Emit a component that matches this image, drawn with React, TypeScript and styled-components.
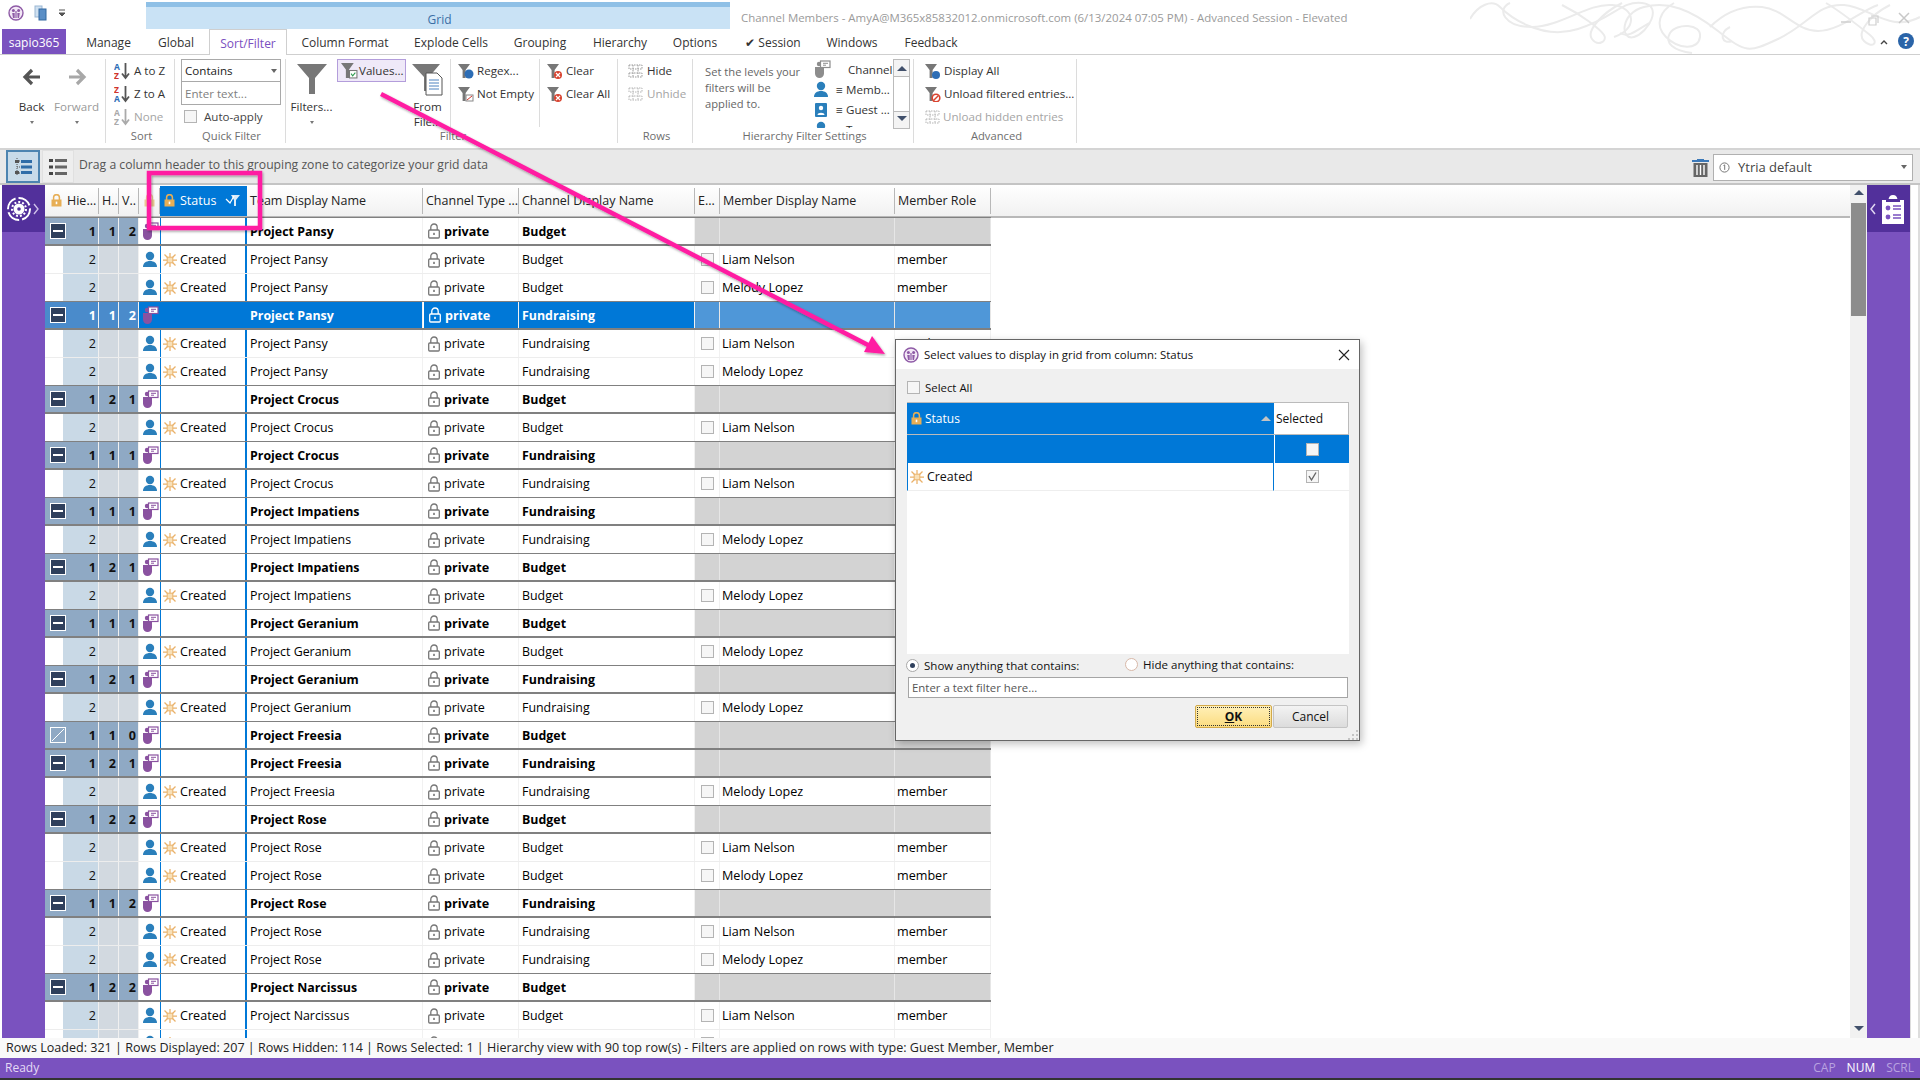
import React from "react";
import styled, { createGlobalStyle } from "styled-components";

const Global = createGlobalStyle`
  html, body { margin: 0; padding: 0; background: #fff; }
  body { width: 1920px; height: 1080px; overflow: hidden; font-family: "Open Sans", "Liberation Sans", sans-serif; font-size: 12px; color: #222; }
  * { box-sizing: border-box; }
`;

const Page = styled.div`
  position: relative; width: 1920px; height: 1080px; display: flex; flex-direction: column; background: #fff; overflow: hidden;
`;

/* ---------- title ---------- */
const TitleBar = styled.div`
  height: 29px; display: flex; align-items: stretch; flex: none;
`;
const Qat = styled.div`
  width: 146px; display: flex; align-items: center; gap: 10px; padding: 0 0 4px 8px;
`;
const ContextTab = styled.div`
  width: 584px; background: #c9e2f5; border-top: 5px solid #8fc0e6; margin-top: 2px; color: #3a6ea5;
  display: flex; align-items: center; justify-content: center; padding-top: 2px; padding-left: 3px; font-size: 12px;
`;
const WindowTitle = styled.div`
  padding: 5px 0 0 11px; color: #9a9a9a; display: flex; align-items: center; font-size: 11.45px; white-space: nowrap;
`;
const Ornament = styled.svg`
  position: absolute; left: 1470px; top: 1px; width: 450px; height: 54px; pointer-events: none;
`;
const WinControls = styled.svg`
  position: absolute; left: 1835px; top: 8px; width: 80px; height: 50px;
`;

const Tabs = styled.div`
  height: 26px; display: flex; padding-left: 2px; border-bottom: 1px solid #cfcfcf; flex: none; position: relative;
`;
const AppTab = styled.div`
  width: 64px; height: 25px; background: #7a52bf; color: #fff; display: flex; align-items: center; justify-content: center; padding-top: 1px;
`;
const Tab = styled.div<{ $w: number; $pl?: number; $active?: boolean }>`
  width: ${p => p.$w}px; height: ${p => (p.$active ? 26 : 25)}px; padding: 1px 0 0 ${p => p.$pl || 0}px; display: flex; align-items: center; justify-content: center; color: ${p => (p.$active ? "#7a4fc0" : "#333")};
  background: #fff; white-space: nowrap; position: relative;
  ${p => p.$active && "border: 1px solid #cfcfcf; border-bottom: none;"}
`;

/* ---------- ribbon ---------- */
const Ribbon = styled.div`
  height: 95px; display: flex; flex: none; border-bottom: 2px solid #d4d4d4; padding-top: 4px; background: #fff;
`;
const Group = styled.div<{ $w: number }>`
  width: ${p => p.$w}px; height: 84px; border-right: 1px solid #dcdcdc; display: flex; flex-direction: column; flex: none;
`;
const GroupBody = styled.div<{ $pl?: number }>`
  height: 70px; display: flex; flex: none; padding-left: ${p => p.$pl ?? 0}px;
`;
const GroupLabel = styled.div`
  height: 14px; line-height: 14px; text-align: center; color: #6e6e6e; font-size: 11.2px; white-space: nowrap; padding-left: 3px;
`;
const NavButton = styled.div<{ $off?: boolean }>`
  width: 45px; display: flex; flex-direction: column; align-items: center; color: ${p => (p.$off ? "#9a9a9a" : "#333")}; font-size: 11.6px; padding-top: 8px;
`;
const NavIconBox = styled.div`
  height: 32px;
`;
const Caret = styled.div`
  width: 0; height: 0; border-left: 2.5px solid transparent; border-right: 2.5px solid transparent; border-top: 3px solid #777; margin-top: 7px;
`;
const SmallCol = styled.div<{ $w: number; $pl: number; $rule?: boolean }>`
  width: ${p => p.$w}px; padding-left: ${p => p.$pl}px; display: flex; flex-direction: column; flex: none;
  ${p => p.$rule && "border-right: 1px solid #dcdcdc; height: 68px;"}
`;
const SmallItem = styled.div<{ $off?: boolean; $gap?: number; $active?: boolean }>`
  height: 23px; display: flex; align-items: center; gap: ${p => p.$gap ?? 2}px; white-space: nowrap; font-size: 11.6px; color: ${p => (p.$off ? "#a5a5a5" : "#333")};
  ${p => p.$active && "background: #efe9f8; border: 1px solid #b39ddb; width: 69px; margin-left: 0; padding-left: 3px;"}
`;
const BigButton = styled.div<{ $w: number; $rule?: boolean; $pl?: number }>`
  width: ${p => p.$w}px; display: flex; flex-direction: column; align-items: center; font-size: 11.6px; flex: none; color: #333; padding-top: 4px; line-height: 15px; text-align: center;
  ${p => p.$rule && "border-right: 1px solid #dcdcdc; height: 68px; padding-right: 2px;"}
`;
const BigIconBox = styled.div`
  height: 36px;
`;
const QuickCol = styled.div`
  padding: 0 0 0 6px; display: flex; flex-direction: column;
`;
const SelectBox = styled.div`
  width: 100px; height: 23px; border: 1px solid #a9a9a9; display: flex; align-items: center; justify-content: space-between; padding: 0 3px; color: #222; font-size: 11.6px;
`;
const TextBox = styled.div`
  width: 100px; height: 23px; border: 1px solid #a9a9a9; border-top: none; display: flex; align-items: center; padding: 0 3px; color: #808080; font-size: 11.6px;
`;
const DownTri = styled.div`
  width: 0; height: 0; border-left: 3.5px solid transparent; border-right: 3.5px solid transparent; border-top: 4px solid #666;
`;
const AutoRow = styled.div`
  height: 22px; display: flex; align-items: center; gap: 7px; padding-left: 3px; font-size: 11.6px; color: #444;
`;
const Check = styled.div`
  width: 13px; height: 13px; border: 1px solid #b4b4b4; background: #f6f6f6; display: flex; align-items: center; justify-content: center; flex: none;
`;
const LevelsText = styled.div`
  width: 117px; padding: 5px 0 0 12px; line-height: 16px; color: #666; font-size: 11.2px; flex: none;
`;
const LevelList = styled.div`
  width: 83px; height: 69px; overflow: hidden; flex: none;
`;
const LevelItem = styled.div`
  height: 20px; display: flex; align-items: center; padding-left: 3px; font-size: 11.6px; color: #333; white-space: nowrap;
`;
const LevelEq = styled.span`
  width: 17px; text-align: center; flex: none; padding-left: 4px;
`;
const LevelScroll = styled.div`
  width: 17px; height: 70px; border: 1px solid #bbb; display: flex; flex-direction: column; justify-content: space-between; flex: none;
`;
const LevelArrow = styled.div`
  height: 17px; border-bottom: 1px solid #bbb; background: #f4f4f4; display: flex; align-items: center; justify-content: center;
  &:last-child { border-bottom: none; border-top: 1px solid #bbb; }
`;

/* ---------- group bar ---------- */
const GroupBar = styled.div`
  height: 35px; background: #e9e9e9; display: flex; align-items: center; padding-left: 6px; border-bottom: 2px solid #c4c4c4; flex: none;
`;
const ViewBtn = styled.div<{ $on?: boolean }>`
  width: ${p => (p.$on ? 34 : 32)}px; height: 33px; margin-right: 2px; display: flex; align-items: center; justify-content: center;
  background: ${p => (p.$on ? "#c8dbe9" : "#eee")}; border: ${p => (p.$on ? "2px solid #4d84b0" : "1px solid #e0e0e0")};
`;
const DragHint = styled.div`
  color: #555; font-size: 12.2px; padding: 0 0 4px 3px; flex: 1; white-space: nowrap;
`;
const Trash = styled.div`
  margin-right: 4px; display: flex;
`;
const ViewCombo = styled.div`
  width: 200px; height: 27px; background: #fff; border: 1px solid #b0b0b0; display: flex; align-items: center; padding: 0 5px; gap: 8px; margin: 1px 7px 0 0; font-size: 13px; color: #444;
`;
const ComboText = styled.span`
  flex: 1;
`;

/* ---------- grid ---------- */
const Main = styled.div`
  height: 853px; display: flex; flex: none; overflow: hidden;
`;
const LeftRail = styled.div`
  width: 43px; margin-left: 2px; background: #7a52bf; flex: none;
`;
const RailHead = styled.div`
  height: 47px; background: #52309b; display: flex; align-items: center; padding-left: 3px;
`;
const Grid = styled.div`
  flex: 1; min-width: 0; overflow: hidden;
`;
const COLS = "54px 20px 20px 21px 87px 176px 96px 176px 25px 175px 96px";
const HeaderRow = styled.div`
  height: 33px; display: flex; background: linear-gradient(#fff, #f1f1f1); border-bottom: 2px solid #b8b8b8;
`;
const HeaderCols = styled.div`
  display: grid; grid-template-columns: ${COLS}; width: 946px;
`;
const HeadCell = styled.div<{ $active?: boolean; $pl?: number }>`
  display: flex; align-items: center; gap: 5px; padding: 0 0 2px ${p => p.$pl ?? 3}px; white-space: nowrap; overflow: hidden;
  border-right: 1px solid ${p => (p.$active ? "#0078d7" : "#b8b8b8")}; margin: ${p => (p.$active ? "1px 0 0 0" : "3px 0 2px 0")};
  background: ${p => (p.$active ? "#0078d7" : "transparent")}; color: ${p => (p.$active ? "#fff" : "#222")};
  font-size: 12.5px;
`;
const HeadFilter = styled.span`
  margin-left: auto; margin-right: 6px; display: flex;
`;
const Row = styled.div<{ $kind: "parent" | "child" | "selected" }>`
  height: 28px; width: 946px; display: grid; grid-template-columns: ${COLS}; position: relative;
  background: ${p => (p.$kind === "selected" ? "#0078d7" : "#fff")};
  color: ${p => (p.$kind === "selected" ? "#fff" : "#000")};
  font-weight: ${p => (p.$kind === "child" ? 400 : 700)};
  border-bottom: ${p => (p.$kind === "child" ? "1px solid #ededed" : "2px solid #808080")};
  ${p => p.$kind !== "child" && "box-shadow: 0 -1px 0 #808080; z-index: 1;"}
`;
const Cell = styled.div`
  display: flex; align-items: center; padding-left: 3px; white-space: nowrap; overflow: hidden; font-size: 12.4px; border-right: 1px solid #f1f1f1;
`;
const HieCell = styled.div<{ $kind: string }>`
  display: flex; align-items: center; justify-content: flex-end; padding-right: 2px; font-size: 12.6px; position: relative;
  background: ${p => (p.$kind === "child" ? "linear-gradient(90deg,#fff 18px,#c9d9e6 18px)" : p.$kind === "selected" ? "#4a8bcb" : "#8fa9c4")};
  border-right: 1px solid #f0f0f0; color: ${p => (p.$kind === "selected" ? "#fff" : "#111")};
`;
const LevelCell = styled.div<{ $kind: string }>`
  display: flex; align-items: center; justify-content: flex-end; padding-right: 2px; font-size: 12.6px;
  background: ${p => (p.$kind === "child" ? "#d2d9e0" : p.$kind === "selected" ? "#4a8bcb" : "#8fa9c4")};
  border-right: 1px solid #f0f0f0; color: ${p => (p.$kind === "selected" ? "#fff" : "#111")};
`;
const ExpandBox = styled.div<{ $flat?: boolean }>`
  position: absolute; left: 5px; top: 5px; width: 16px; height: 16px; border: 1px solid #fff;
  background: ${p => (p.$flat ? "transparent" : "#2e3f5c")}; display: flex; align-items: center; justify-content: center;
`;
const Minus = styled.div`
  width: 10px; height: 2px; background: #fff;
`;
const IconCell = styled.div`
  display: flex; align-items: center; justify-content: center;
`;
const StatusCell = styled.div`
  display: flex; align-items: center; gap: 3px; padding-left: 2px; font-size: 12.6px; border-left: 1px solid #0078d7; border-right: 2px solid #0078d7;
`;
const TypeCell = styled.div<{ $sel?: boolean }>`
  display: flex; align-items: center; gap: 3px; padding-left: 4px; font-size: 12.6px; border-right: 1px solid #f1f1f1;
  ${p => p.$sel && "border-left: 1px solid #fff;"}
`;
const GrayCell = styled.div<{ $kind: string }>`
  display: flex; align-items: center; padding-left: 2px; font-size: 12.6px; white-space: nowrap;
  background: ${p => (p.$kind === "parent" ? "#d3d3d3" : p.$kind === "selected" ? "#4f97d8" : "transparent")};
  border-right: 1px solid ${p => (p.$kind === "child" ? "#f1f1f1" : "#e6e6e6")};
`;
const ECell = styled(GrayCell)`
  justify-content: center; padding-left: 1px;
`;

const VScroll = styled.div`
  width: 17px; flex: none; background: #f1f1f1; display: flex; flex-direction: column; align-items: center; padding-top: 5px;
`;
const ScrollUp = styled.div`
  width: 0; height: 0; border-left: 5px solid transparent; border-right: 5px solid transparent; border-bottom: 5px solid #41506b;
`;
const Thumb = styled.div`
  width: 15px; height: 113px; background: #8c8c8c; margin-top: 8px;
`;
const ScrollDown = styled.div`
  width: 0; height: 0; border-left: 5px solid transparent; border-right: 5px solid transparent; border-top: 5px solid #41506b; margin-top: auto; margin-bottom: 7px;
`;
const RightRail = styled.div`
  width: 43px; background: #7a52bf; flex: none;
`;
const RightHead = styled.div`
  height: 47px; background: #52309b; display: flex; align-items: center; padding-left: 2px;
`;
const RightEdge = styled.div`
  width: 10px; flex: none; border-left: 1px solid #ddd; border-right: 2px solid #ddd;
`;

/* ---------- status ---------- */
const InfoLine = styled.div`
  height: 20px; background: #f9f9f9; padding: 0 0 1px 6px; display: flex; align-items: center; color: #222; font-size: 12.55px; white-space: nowrap; flex: none;
`;
const ReadyBar = styled.div`
  height: 20px; background: #7a52bf; color: #e4daf5; display: flex; align-items: center; padding: 0 6px 1px 5px; font-size: 12px; flex: none;
`;
const ReadyText = styled.span`
  flex: 1;
`;
const Indicator = styled.span<{ $on?: boolean }>`
  margin-left: 11px; color: ${p => (p.$on ? "#fff" : "#b9a3e0")};
`;
const Taskbar = styled.div`
  height: 3px; background: #333; flex: none;
`;

/* ---------- annotation ---------- */
const Annotation = styled.svg`
  position: absolute; left: 0; top: 0; width: 1920px; height: 1080px; pointer-events: none; z-index: 5;
`;

/* ---------- dialog ---------- */
const Dialog = styled.div`
  position: absolute; left: 895px; top: 339px; width: 465px; height: 402px; background: #f0f0f0; border: 1px solid #666; box-shadow: 2px 3px 8px rgba(0,0,0,.25); z-index: 6; display: flex; flex-direction: column;
`;
const DialogTitle = styled.div`
  height: 29px; background: #fff; display: flex; align-items: center; padding: 0 9px 0 7px; gap: 5px; color: #111; font-size: 11.4px; flex: none;
`;
const DialogTitleText = styled.span`
  flex: 1;
`;
const SelectAll = styled.div`
  height: 33px; display: flex; align-items: center; gap: 5px; padding: 4px 0 0 11px; font-size: 11.4px; flex: none; color: #111;
`;
const DGrid = styled.div`
  margin: 0 10px 0 11px; height: 252px; background: #fff; border-top: 1px solid #bbb; flex: none;
`;
const DRow = styled.div<{ $h: number; $blue?: boolean }>`
  height: ${p => p.$h}px; display: grid; grid-template-columns: 367px 1fr;
  ${p => p.$blue && "background: #0078d7;"}
`;
const DHeadStatus = styled.div`
  background: #0078d7; color: #fff; display: flex; align-items: center; gap: 3px; padding-left: 4px; font-size: 12px; border-bottom: 1px solid #bbb;
`;
const SortUp = styled.div`
  margin-left: auto; margin-right: 3px; width: 0; height: 0; border-left: 5px solid transparent; border-right: 5px solid transparent; border-bottom: 5px solid #c4c4c4;
`;
const DHeadSelected = styled.div`
  background: #fff; display: flex; align-items: center; padding-left: 2px; font-size: 12px; border-right: 1px solid #bbb; border-bottom: 1px solid #bbb; color: #111;
`;
const DCell = styled.div<{ $edge?: boolean }>`
  display: flex; align-items: center; gap: 3px; padding-left: 2px; font-size: 12.4px; color: #111;
  ${p => p.$edge && "border-left: 1px solid #0078d7; border-right: 1px solid #0078d7; border-bottom: 1px solid #eee;"}
`;
const DCheckCell = styled.div<{ $blue?: boolean }>`
  display: flex; align-items: center; justify-content: center; border-left: 1px solid ${p => (p.$blue ? "#fff" : "transparent")}; ${p => !p.$blue && "border-bottom: 1px solid #eee;"}
`;
const RadioRow = styled.div`
  height: 23px; display: flex; padding: 0 0 0 10px; flex: none; font-size: 11.55px; color: #111;
`;
const RadioOpt = styled.div<{ $w?: number; $up?: number }>`
  display: flex; align-items: center; gap: 5px; width: ${p => p.$w ?? 219}px; margin-top: ${p => -(p.$up ?? 0)}px;
`;
const Radio = styled.div<{ $on?: boolean }>`
  width: 13px; height: 13px; border-radius: 50%; border: 1px solid ${p => (p.$on ? "#a8a8a8" : "#d8b8a8")}; background: #fff; display: flex; align-items: center; justify-content: center; flex: none;
  &::after { content: ""; width: 5px; height: 5px; border-radius: 50%; background: ${p => (p.$on ? "#2e3f5c" : "transparent")}; }
`;
const FilterInput = styled.div`
  margin: 0 11px 0 12px; height: 21px; background: #fff; border: 1px solid #a5a5a5; display: flex; align-items: center; padding-left: 3px; color: #555; font-size: 11.4px; flex: none;
`;
const DButtons = styled.div`
  display: flex; justify-content: flex-end; margin: 7px 11px 0 0; gap: 1px; flex: none;
`;
const OkBtn = styled.div`
  width: 77px; height: 23px; border: 1px solid #d2a94a; background: linear-gradient(#fff0b8, #fbdc80); border-radius: 2px; display: flex; align-items: center; justify-content: center; font-weight: 700; color: #111; font-size: 12px; outline: 1px dotted #333; outline-offset: -3px;
`;
const OkKey = styled.span`
  text-decoration: underline;
`;
const CancelBtn = styled.div`
  width: 75px; height: 23px; border: 1px solid #c4c4c4; background: linear-gradient(#f3f3f3, #dcdcdc); border-radius: 2px; display: flex; align-items: center; justify-content: center; font-size: 12px; color: #111;
`;
const Grip = styled.svg`
  position: absolute; right: 0; bottom: 0; width: 12px; height: 12px;
`;

/* ---------- icons ---------- */
const Funnel = ({ s = 16, c = "#777", badge }: { s?: number; c?: string; badge?: React.ReactNode }) => (
  <svg width={s} height={s} viewBox="0 0 16 16">
    <path d="M0 1h12L7.6 7v8H4.6V7z" fill={c} />
    {badge}
  </svg>
);
const X = ({ x = 11, y = 12, r = 4 }) => (
  <g>
    <circle cx={x} cy={y} r={r} fill="#d9432f" />
    <path d={`M${x - 2} ${y - 2}l4 4m0-4l-4 4`} stroke="#fff" strokeWidth="1.2" />
  </g>
);
const Team = ({ c = "#8a52a0" }: { c?: string }) => (
  <svg width="18" height="18" viewBox="0 0 18 18">
    <path d="M2 7h9v6.5a4.5 4.5 0 0 1-9 0z" fill={c} />
    <circle cx="6" cy="4" r="2.2" fill={c} />
    <rect x="7.5" y="1" width="9.5" height="6.5" fill="#fff" stroke={c} strokeWidth="1.2" />
    <path d="M10 3.3h5M10 5.2h3" stroke={c} strokeWidth="1" />
  </svg>
);
const Person = () => (
  <svg width="16" height="17" viewBox="0 0 16 17">
    <circle cx="8" cy="5" r="4.2" fill="#2a7fbb" />
    <path d="M1 16c0-4 3-6 7-6s7 2 7 6z" fill="#2a7fbb" />
  </svg>
);
const Sun = () => (
  <svg width="14" height="14" viewBox="0 0 14 14" stroke="#eab26a" strokeWidth="1.25" fill="none">
    <path d="M7 0v4M7 10v4M0 7h4M10 7h4M1.5 1.5l3 3M9.5 9.5l3 3M12.5 1.5l-3 3M4.5 9.5l-3 3" />
    <rect x="4.2" y="4.2" width="5.6" height="5.6" fill="#f8e0b8" strokeWidth="1" />
  </svg>
);
const Lock = ({ c = "#777" }: { c?: string }) => (
  <svg width="14" height="16" viewBox="0 0 14 16" fill="none" stroke={c} strokeWidth="1.3">
    <path d="M3.8 7V4.2a3.2 3.2 0 0 1 6.4 0V7" />
    <rect x="1.7" y="7" width="10.6" height="8" rx="1" />
    <rect x="6.2" y="9.8" width="1.6" height="2.2" fill={c} stroke="none" />
  </svg>
);
const GoldLock = ({ op = 1 }: { op?: number }) => (
  <svg width="11" height="13" viewBox="0 0 11 13" opacity={op}>
    <path d="M2.6 6V3.6a2.9 2.9 0 0 1 5.8 0V6" fill="none" stroke="#e7ae55" strokeWidth="1.5" />
    <rect x="0.5" y="5.5" width="10" height="7" fill="#e7ae55" />
    <rect x="4.7" y="7.6" width="1.6" height="2.6" fill="#fff" />
  </svg>
);
const AppLogo = ({ s = 16 }: { s?: number }) => (
  <svg width={s} height={s} viewBox="0 0 16 16">
    <circle cx="8" cy="8" r="7" fill="#f3e8f6" stroke="#8e5aa6" strokeWidth="1.4" />
    <circle cx="5.4" cy="5.6" r="1.5" fill="#8e5aa6" />
    <circle cx="10.6" cy="5.6" r="1.5" fill="#8e5aa6" />
    <path d="M4.2 8h2.5v5H5zM9.3 8h2.5L11 13H9.6zM7.4 6h1.2v7H7.4z" fill="#8e5aa6" />
  </svg>
);
const SortIcon = ({ top, bottom, off }: { top: string; bottom: string; off?: boolean }) => (
  <svg width="18" height="18" viewBox="0 0 18 18" fontFamily="Open Sans" fontSize="8.5" fontWeight="700">
    <text x="0" y="8" fill={off ? "#aaa" : top === "A" ? "#2d6db5" : "#d0342c"}>{top}</text>
    <text x="0" y="17" fill={off ? "#aaa" : bottom === "A" ? "#2d6db5" : "#d0342c"}>{bottom}</text>
    <path d="M11.5 1v14M8 11.5l3.5 4.5 3.5-4.5" fill="none" stroke={off ? "#aaa" : "#555"} strokeWidth="1.8" />
  </svg>
);
const GridIcon = ({ off = false }: { off?: boolean }) => (
  <svg width="15" height="16" viewBox="0 0 15 16" fill="none" stroke={off ? "#b4b4b4" : "#999"} strokeDasharray="1.5 1">
    <path d="M1 2h13v4H1zM1 10h13v4H1z" />
    <path d="M5 2v12M10 2v12" />
  </svg>
);

const rows: { k: "parent" | "child" | "selected"; nums?: string; team: string; ch: string; m?: string; flat?: boolean; clipped?: boolean }[] = [
  { k: "parent", nums: "112", team: "Pansy", ch: "Budget" },
  { k: "child", team: "Pansy", ch: "Budget", m: "Liam Nelson" },
  { k: "child", team: "Pansy", ch: "Budget", m: "Melody Lopez" },
  { k: "selected", nums: "112", team: "Pansy", ch: "Fundraising" },
  { k: "child", team: "Pansy", ch: "Fundraising", m: "Liam Nelson" },
  { k: "child", team: "Pansy", ch: "Fundraising", m: "Melody Lopez" },
  { k: "parent", nums: "121", team: "Crocus", ch: "Budget" },
  { k: "child", team: "Crocus", ch: "Budget", m: "Liam Nelson" },
  { k: "parent", nums: "111", team: "Crocus", ch: "Fundraising" },
  { k: "child", team: "Crocus", ch: "Fundraising", m: "Liam Nelson" },
  { k: "parent", nums: "111", team: "Impatiens", ch: "Fundraising" },
  { k: "child", team: "Impatiens", ch: "Fundraising", m: "Melody Lopez" },
  { k: "parent", nums: "121", team: "Impatiens", ch: "Budget" },
  { k: "child", team: "Impatiens", ch: "Budget", m: "Melody Lopez" },
  { k: "parent", nums: "111", team: "Geranium", ch: "Budget" },
  { k: "child", team: "Geranium", ch: "Budget", m: "Melody Lopez" },
  { k: "parent", nums: "121", team: "Geranium", ch: "Fundraising" },
  { k: "child", team: "Geranium", ch: "Fundraising", m: "Melody Lopez" },
  { k: "parent", nums: "110", team: "Freesia", ch: "Budget", flat: true },
  { k: "parent", nums: "121", team: "Freesia", ch: "Fundraising" },
  { k: "child", team: "Freesia", ch: "Fundraising", m: "Melody Lopez" },
  { k: "parent", nums: "122", team: "Rose", ch: "Budget" },
  { k: "child", team: "Rose", ch: "Budget", m: "Liam Nelson" },
  { k: "child", team: "Rose", ch: "Budget", m: "Melody Lopez" },
  { k: "parent", nums: "112", team: "Rose", ch: "Fundraising" },
  { k: "child", team: "Rose", ch: "Fundraising", m: "Liam Nelson" },
  { k: "child", team: "Rose", ch: "Fundraising", m: "Melody Lopez" },
  { k: "parent", nums: "122", team: "Narcissus", ch: "Budget" },
  { k: "child", team: "Narcissus", ch: "Budget", m: "Liam Nelson" },
  { k: "child", team: "Narcissus", ch: "Budget", clipped: true },
];

const tabs: [string, number, number?, boolean?][] = [
  ["Manage", 77, 8], ["Global", 66], ["Sort/Filter", 78, 0, true], ["Column Format", 116], ["Explode Cells", 96], ["Grouping", 82],
  ["Hierarchy", 78], ["Options", 72], ["✔ Session", 84], ["Windows", 74], ["Feedback", 84],
];

export default function App() {
  return (
    <Page>
      <Global />
      <TitleBar>
        <Qat>
          <AppLogo />
          <svg width="14" height="16" viewBox="0 0 14 16"><rect x="1" y="1" width="7" height="11" fill="#cfe0f0" stroke="#9bb7d4" /><rect x="5" y="4" width="7" height="11" fill="#5b8fc6" stroke="#33689f" /></svg>
          <svg width="8" height="8" viewBox="0 0 8 8"><path d="M1 1h6M1 4h6L4 7z" stroke="#555" fill="#555" /></svg>
        </Qat>
        <ContextTab>Grid</ContextTab>
        <WindowTitle>Channel Members - AmyA@M365x85832012.onmicrosoft.com (6/13/2024 07:05 PM) - Advanced Session - Elevated</WindowTitle>
      </TitleBar>
      <Ornament viewBox="0 0 450 54" fill="none" stroke="#ebebeb" strokeWidth="2">
        <path d="M0 18C8 4 22-2 30 6s40 34 78 22S150 0 172 2s6 30-8 34-14-24 10-30 46 2 74 24 30 22 60 8 40-36 66-34 46 28 76 12" />
        <path d="M40 2C26 8 34 26 62 26S118 2 142 4s26 24 2 32" />
        <path d="M92 4c20 10 38 24 42 30s-6 12-12 4 10-26 30-36" />
        <path d="M204 2c-14 8-20 22-8 34s32 14 34 0-24-14-30-4 4 18 22 20" />
        <path d="M240 26c14-14 30-22 52-20s34 24 56 24 42-20 60-26M356 2c14 8 34 24 44 32s2 14-6 6 6-26 26-36" />
        <path d="M150 32c10 6 20-6 30-10M262 40c-10 4-14-8-2-14" />
      </Ornament>
      <WinControls viewBox="0 0 80 50" fill="none">
        <path d="M6 14h10" stroke="#cfcfcf" strokeWidth="1.5" />
        <path d="M36 8h7v7M34 10h7v7h-7z" stroke="#cfcfcf" strokeWidth="1.2" />
        <path d="M64 5l10 10m0-10L64 15" stroke="#c8c8c8" strokeWidth="1.5" />
        <path d="M46 36l3-3 3 3" stroke="#444" strokeWidth="1.4" />
        <circle cx="71" cy="33" r="8" fill="#2a64a8" />
        <text x="71" y="37.5" textAnchor="middle" fill="#fff" fontFamily="Open Sans" fontWeight="700" fontSize="12">?</text>
      </WinControls>
      <Tabs>
        <AppTab>sapio365</AppTab>
        {tabs.map(([t, w, pl, a]) => (
          <Tab key={t} $w={w} $pl={pl} $active={a}>{t}</Tab>
        ))}
      </Tabs>

      <Ribbon>
        <Group $w={106}>
          <GroupBody $pl={9}>
            <NavButton>
              <NavIconBox>
                <svg width="20" height="20" viewBox="0 0 20 20"><path d="M18 10H4M10 3l-7 7 7 7" fill="none" stroke="#555" strokeWidth="3.2" /></svg>
              </NavIconBox>
              Back<Caret />
            </NavButton>
            <NavButton $off>
              <NavIconBox>
                <svg width="20" height="20" viewBox="0 0 20 20"><path d="M2 10h14M10 3l7 7-7 7" fill="none" stroke="#a8a8a8" strokeWidth="3.2" /></svg>
              </NavIconBox>
              Forward<Caret />
            </NavButton>
          </GroupBody>
          <GroupLabel />
        </Group>
        <Group $w={69}>
          <GroupBody>
            <SmallCol $w={69} $pl={8}>
              <SmallItem><SortIcon top="A" bottom="Z" />A to Z</SmallItem>
              <SmallItem><SortIcon top="Z" bottom="A" />Z to A</SmallItem>
              <SmallItem $off><SortIcon top="A" bottom="Z" off />None</SmallItem>
            </SmallCol>
          </GroupBody>
          <GroupLabel>Sort</GroupLabel>
        </Group>
        <Group $w={111}>
          <GroupBody>
            <QuickCol>
              <SelectBox>Contains<DownTri /></SelectBox>
              <TextBox>Enter text...</TextBox>
              <AutoRow><Check />Auto-apply</AutoRow>
            </QuickCol>
          </GroupBody>
          <GroupLabel>Quick Filter</GroupLabel>
        </Group>
        <Group $w={332}>
          <GroupBody>
            <BigButton $w={51}>
              <BigIconBox>
                <svg width="32" height="32" viewBox="0 0 32 32"><path d="M1 1h30L19 15v16h-6V15z" fill="#777" /></svg>
              </BigIconBox>
              Filters...<Caret />
            </BigButton>
            <SmallCol $w={70} $pl={0}>
              <SmallItem $active $gap={1}>
                <Funnel s={17} badge={<g><rect x="8" y="8" width="7" height="7" fill="#fff" stroke="#777" /><path d="M9.5 11l1.5 2 2.5-3" stroke="#2c9a4f" fill="none" /></g>} />Values...
              </SmallItem>
            </SmallCol>
            <BigButton $w={44} $rule>
              <BigIconBox>
                <svg width="34" height="34" viewBox="0 0 34 34"><path d="M1 1h28L18 14v14h-5V14z" fill="#777" /><path d="M15 10h11l5 5v17H15z" fill="#fff" stroke="#555" /><path d="M18 17h10M18 20h10M18 23h10M18 26h10" stroke="#4c82c0" /></svg>
              </BigIconBox>
              From<br />File...
            </BigButton>
            <SmallCol $w={89} $pl={7} $rule>
              <SmallItem $gap={3}><Funnel badge={<circle cx="11" cy="11" r="4.5" fill="#2d6db5" />} />Regex...</SmallItem>
              <SmallItem $gap={3}><Funnel badge={<g><rect x="8" y="9" width="7" height="6" fill="#fff" stroke="#888" /><path d="M9 14l5-4" stroke="#d0342c" /></g>} />Not Empty</SmallItem>
            </SmallCol>
            <SmallCol $w={78} $pl={7}>
              <SmallItem $gap={3}><Funnel badge={<X />} />Clear</SmallItem>
              <SmallItem $gap={3}><Funnel badge={<X />} />Clear All</SmallItem>
            </SmallCol>
          </GroupBody>
          <GroupLabel>Filter</GroupLabel>
        </Group>
        <Group $w={75}>
          <GroupBody>
            <SmallCol $w={75} $pl={10}>
              <SmallItem $gap={4}><GridIcon />Hide</SmallItem>
              <SmallItem $off $gap={4}><GridIcon off />Unhide</SmallItem>
            </SmallCol>
          </GroupBody>
          <GroupLabel>Rows</GroupLabel>
        </Group>
        <Group $w={221}>
          <GroupBody>
            <LevelsText>Set the levels your filters will be applied to.</LevelsText>
            <LevelList>
              <LevelItem>
                <Team c="#8d8d8d" /><LevelEq />Channel
              </LevelItem>
              <LevelItem><Person /><LevelEq>≡</LevelEq>Memb...</LevelItem>
              <LevelItem>
                <svg width="16" height="17" viewBox="0 0 16 17"><rect x="2" y="2" width="12" height="14" rx="1" fill="#2a7fbb" /><circle cx="8" cy="7" r="2.2" fill="#fff" /><path d="M4.5 14c0-3 7-3 7 0z" fill="#fff" /></svg>
                <LevelEq>≡</LevelEq>Guest ...
              </LevelItem>
              <LevelItem><Person /><LevelEq />Team</LevelItem>
            </LevelList>
            <LevelScroll>
              <LevelArrow><ScrollUp /></LevelArrow>
              <LevelArrow><ScrollDown /></LevelArrow>
            </LevelScroll>
          </GroupBody>
          <GroupLabel>Hierarchy Filter Settings</GroupLabel>
        </Group>
        <Group $w={163}>
          <GroupBody>
            <SmallCol $w={163} $pl={11}>
              <SmallItem $gap={3}><Funnel badge={<circle cx="11" cy="12" r="4" fill="#2d6db5" />} />Display All</SmallItem>
              <SmallItem $gap={3}><Funnel badge={<g><circle cx="11" cy="12" r="3.8" fill="#fff" stroke="#d9432f" strokeWidth="1.6" /><path d="M8.5 14.5l5-5" stroke="#d9432f" strokeWidth="1.4" /></g>} />Unload filtered entries...</SmallItem>
              <SmallItem $off $gap={3}><GridIcon off />Unload hidden entries</SmallItem>
            </SmallCol>
          </GroupBody>
          <GroupLabel>Advanced</GroupLabel>
        </Group>
      </Ribbon>

      <GroupBar>
        <ViewBtn $on>
          <svg width="20" height="20" viewBox="0 0 20 20"><path d="M4 1v18M4 4h3M4 10h3M4 16h3" stroke="#555" strokeDasharray="1 1" fill="none" /><path d="M8 3h11v3H8zM8 8.5h11v3H8zM8 14h11v3H8z" fill="#2f6da8" /><path d="M2 3h4v3H2zM2 14h4v3H2z" fill="#555" /></svg>
        </ViewBtn>
        <ViewBtn>
          <svg width="20" height="18" viewBox="0 0 20 18"><path d="M1 1h4v3H1zM1 7.5h4v3H1zM1 14h4v3H1z" fill="#444" /><path d="M7 1h12v3H7zM7 7.5h12v3H7zM7 14h12v3H7z" fill="#666" /></svg>
        </ViewBtn>
        <DragHint>Drag a column header to this grouping zone to categorize your grid data</DragHint>
        <Trash>
          <svg width="17" height="20" viewBox="0 0 17 20"><path d="M5 2h7v2H5z" fill="#3b78b8" /><path d="M0 3h17v2H0z" fill="#3b78b8" /><path d="M1.5 6h14v14h-14z" fill="#666" /><path d="M5 8v10M8.5 8v10M12 8v10" stroke="#fff" strokeWidth="1.4" /></svg>
        </Trash>
        <ViewCombo>
          <svg width="11" height="11" viewBox="0 0 11 11"><circle cx="5.5" cy="5.5" r="4.6" fill="none" stroke="#777" /><path d="M4.5 3.5l1.2-.6v5" fill="none" stroke="#777" /></svg>
          <ComboText>Ytria default</ComboText>
          <DownTri />
        </ViewCombo>
      </GroupBar>

      <Main>
        <LeftRail>
          <RailHead>
            <svg width="34" height="30" viewBox="0 0 34 30">
              <circle cx="14" cy="15" r="11" fill="none" stroke="#fff" strokeWidth="2" strokeDasharray="14 3" />
              <circle cx="14" cy="15" r="5.5" fill="#fff" />
              <circle cx="14" cy="15" r="7" fill="none" stroke="#fff" strokeWidth="2" strokeDasharray="2 2" />
              <circle cx="14" cy="15" r="1.8" fill="#52309b" />
              <path d="M29 10l4 5-4 5" stroke="#cfc0ea" fill="none" strokeWidth="1.4" />
            </svg>
          </RailHead>
        </LeftRail>
        <Grid>
          <HeaderRow>
            <HeaderCols>
              <HeadCell $pl={6}><GoldLock />Hie...</HeadCell>
              <HeadCell>H..</HeadCell>
              <HeadCell>V..</HeadCell>
              <HeadCell $pl={5}><GoldLock op={0.6} /></HeadCell>
              <HeadCell $active $pl={4}><GoldLock />Status
                <HeadFilter>
                  <svg width="15" height="13" viewBox="0 0 15 13"><path d="M1 5l4 4 4-7" stroke="#fff" strokeWidth="1.2" fill="none" /><path d="M6 1h9L11 6v6H9V6z" fill="#fff" opacity=".85" /></svg>
                </HeadFilter>
              </HeadCell>
              <HeadCell>Team Display Name</HeadCell>
              <HeadCell>Channel Type ...</HeadCell>
              <HeadCell>Channel Display Name</HeadCell>
              <HeadCell>E...</HeadCell>
              <HeadCell>Member Display Name</HeadCell>
              <HeadCell>Member Role</HeadCell>
            </HeaderCols>
          </HeaderRow>
          {rows.map((r, i) => {
            const child = r.k === "child";
            const sel = r.k === "selected";
            const showText = !r.clipped;
            return (
              <Row key={i} $kind={r.k}>
                <HieCell $kind={r.k}>
                  {!child && <ExpandBox $flat={r.flat}>{r.flat ? <svg width="14" height="14" viewBox="0 0 14 14"><path d="M1 13L13 1" stroke="#fff" /></svg> : <Minus />}</ExpandBox>}
                  {showText && (child ? "2" : r.nums![0])}
                </HieCell>
                <LevelCell $kind={r.k}>{child ? "" : r.nums![1]}</LevelCell>
                <LevelCell $kind={r.k}>{child ? "" : r.nums![2]}</LevelCell>
                <IconCell>{child ? <Person /> : <Team c={"#8a52a0"} />}</IconCell>
                <StatusCell>{child && <><Sun />{showText && "Created"}</>}</StatusCell>
                <Cell>{showText && `Project ${r.team}`}</Cell>
                <TypeCell $sel={sel}><Lock c={sel ? "#fff" : "#777"} />{showText && "private"}</TypeCell>
                <Cell>{showText && r.ch}</Cell>
                <ECell $kind={r.k}>{child && <Check />}</ECell>
                <GrayCell $kind={r.k}>{r.m}</GrayCell>
                <GrayCell $kind={r.k}>{child && showText ? "member" : ""}</GrayCell>
              </Row>
            );
          })}
        </Grid>
        <VScroll>
          <ScrollUp />
          <Thumb />
          <ScrollDown />
        </VScroll>
        <RightRail>
          <RightHead>
            <svg width="36" height="30" viewBox="0 0 36 30">
              <path d="M6 10L2 15l4 5" stroke="#e0d6f2" fill="none" strokeWidth="1.5" />
              <rect x="13" y="6" width="22" height="24" fill="#fff" />
              <path d="M19 7a5 5 0 0 1 10 0" fill="#fff" />
              <path d="M17 5h14v3H17z" fill="#52309b" />
              <path d="M20 5a4 4 0 0 1 8 0z" fill="#fff" />
              <circle cx="19" cy="14" r="2.4" fill="#7a52bf" /><circle cx="19" cy="23" r="2.4" fill="#7a52bf" />
              <path d="M24 12h8M24 15h8M24 21h8M24 24h8" stroke="#7a52bf" strokeWidth="1.3" />
            </svg>
          </RightHead>
        </RightRail>
        <RightEdge />
      </Main>

      <InfoLine>Rows Loaded: 321 | Rows Displayed: 207 | Rows Hidden: 114 | Rows Selected: 1 | Hierarchy view with 90 top row(s) - Filters are applied on rows with type: Guest Member, Member</InfoLine>
      <ReadyBar>
        <ReadyText>Ready</ReadyText>
        <Indicator>CAP</Indicator>
        <Indicator $on>NUM</Indicator>
        <Indicator>SCRL</Indicator>
      </ReadyBar>
      <Taskbar />

      <Annotation viewBox="0 0 1920 1080">
        <defs>
          <filter id="pinkShadow" x="-5%" y="-5%" width="110%" height="110%">
            <feDropShadow dx="1" dy="1.5" stdDeviation="1.2" floodColor="#000" floodOpacity=".35" />
          </filter>
        </defs>
        <g filter="url(#pinkShadow)">
          <rect x="149" y="173" width="111" height="55" fill="none" stroke="#ff1fa2" strokeWidth="4.5" />
          <path d="M381 94L870 346" stroke="#ff1fa2" strokeWidth="4.5" fill="none" />
          <path d="M885 354L864 352L872 336z" fill="#ff1fa2" />
        </g>
      </Annotation>

      <Dialog>
        <DialogTitle>
          <AppLogo />
          <DialogTitleText>Select values to display in grid from column: Status</DialogTitleText>
          <svg width="12" height="12" viewBox="0 0 12 12"><path d="M1 1l10 10m0-10L1 11" stroke="#222" strokeWidth="1.1" /></svg>
        </DialogTitle>
        <SelectAll><Check />Select All</SelectAll>
        <DGrid>
          <DRow $h={32}>
            <DHeadStatus><GoldLock />Status<SortUp /></DHeadStatus>
            <DHeadSelected>Selected</DHeadSelected>
          </DRow>
          <DRow $h={28} $blue>
            <DCell />
            <DCheckCell $blue><Check /></DCheckCell>
          </DRow>
          <DRow $h={28}>
            <DCell $edge><Sun />Created</DCell>
            <DCheckCell>
              <Check>
                <svg width="11" height="11" viewBox="0 0 11 11"><path d="M2 5l2.5 4L9 1.5" stroke="#666" strokeWidth="1.4" fill="none" /></svg>
              </Check>
            </DCheckCell>
          </DRow>
        </DGrid>
        <RadioRow>
          <RadioOpt><Radio $on />Show anything that contains:</RadioOpt>
          <RadioOpt $up={2}><Radio />Hide anything that contains:</RadioOpt>
        </RadioRow>
        <FilterInput>Enter a text filter here...</FilterInput>
        <DButtons>
          <OkBtn><OkKey>O</OkKey>K</OkBtn>
          <CancelBtn>Cancel</CancelBtn>
        </DButtons>
        <Grip viewBox="0 0 12 12"><path d="M9 2h2v2H9zM5 6h2v2H5zM9 6h2v2H9zM1 10h2v2H1zM5 10h2v2H5zM9 10h2v2H9z" fill="#c4c4c4" /></Grip>
      </Dialog>
    </Page>
  );
}
